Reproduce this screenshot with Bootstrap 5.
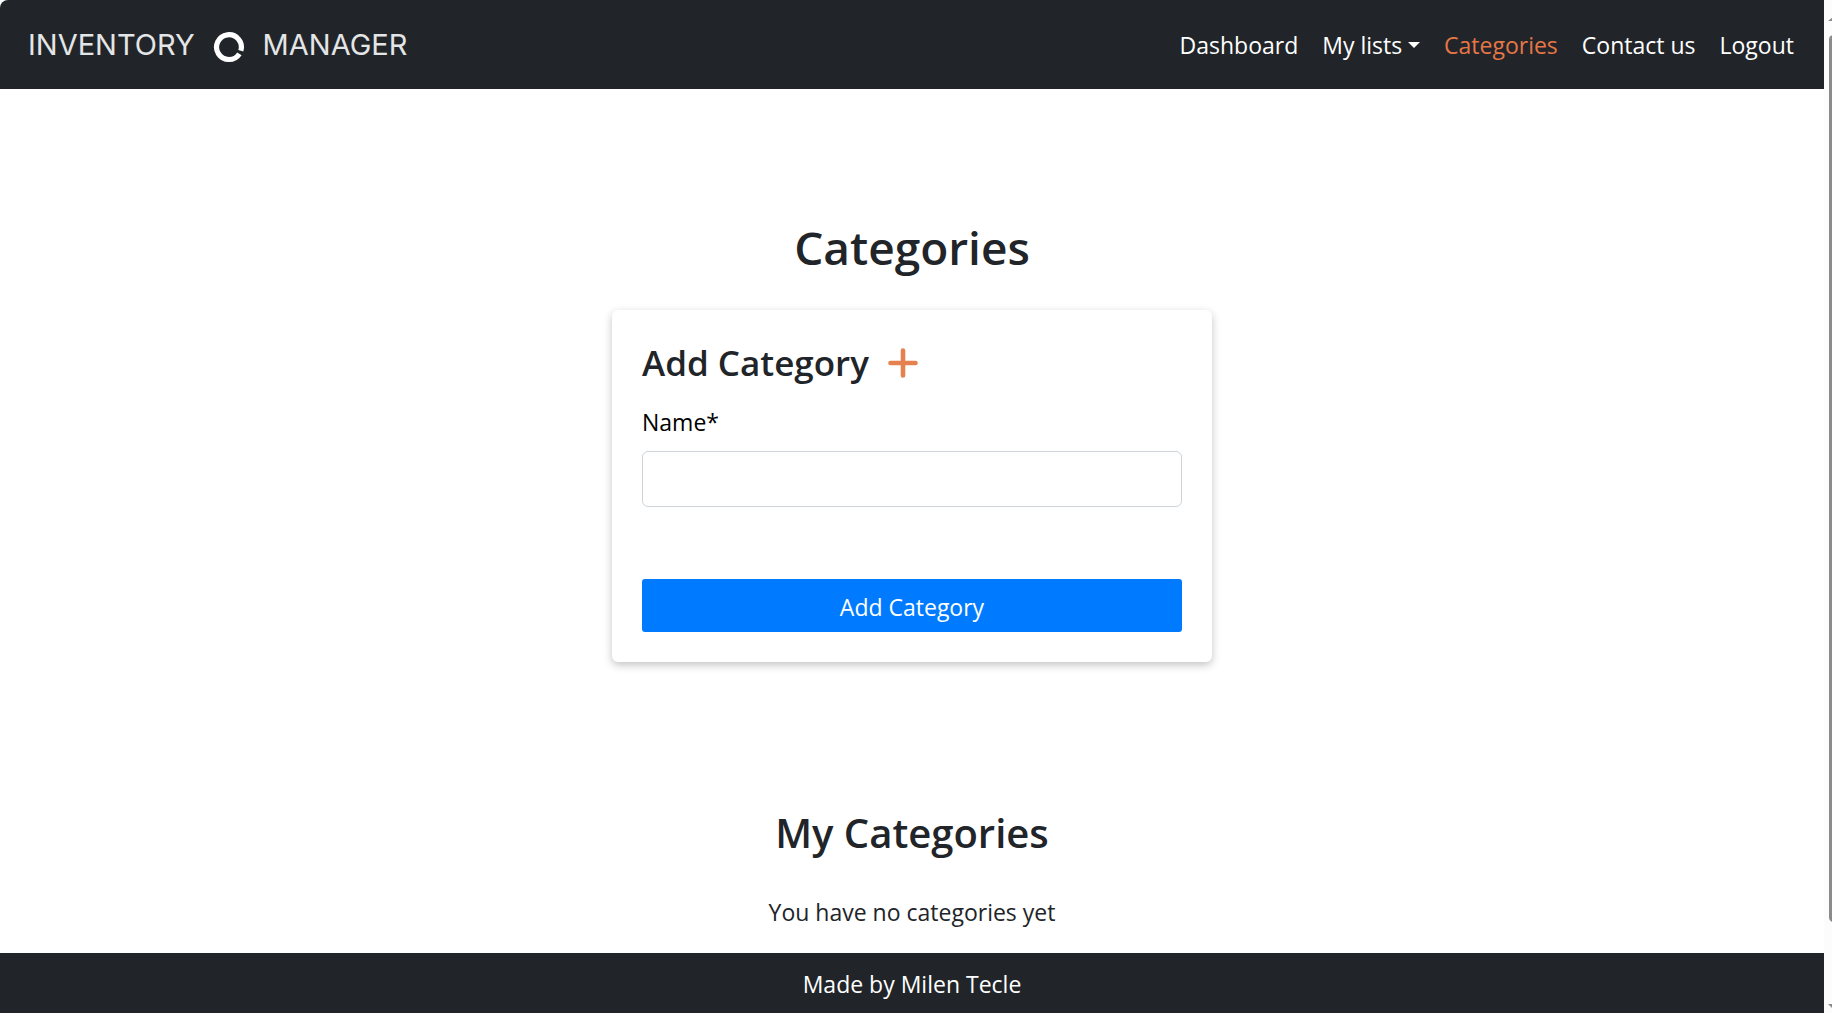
<!DOCTYPE html>
<html lang="en">
<head>
<meta charset="utf-8">
<meta name="viewport" content="width=device-width, initial-scale=1">
<title>Categories - Inventory Manager</title>
<link href="https://cdn.jsdelivr.net/npm/bootstrap@5.3.0/dist/css/bootstrap.min.css" rel="stylesheet">
<style>
  body { font-family: "Open Sans", "Noto Sans", sans-serif; font-size: 23px; line-height: 36px; color: #212529; background: #fff; }
  h1, h2, h3 { font-weight: 600; }
  .site-nav { min-height: 89px; padding: 0 18px; border-top-left-radius: 8px; --bs-navbar-nav-link-padding-x: 12px; }
  .site-nav .nav-link { padding: 12px; line-height: 36px; color: #fff; }
  .site-nav .nav-link.active { color: #e67646; }
  .brand-logo { font-family: Inter, sans-serif; font-size: 29px; line-height: 36px; font-weight: 400; color: #e4e5e6; padding: 0; margin-left: 10px; gap: 18px; }
  .brand-logo svg { margin-top: 4px; }
  .brand-logo:hover { color: #fff; }
  .page-title { font-size: 46px; line-height: 56px; margin: 130px 0 35px; }
  .add-card { width: 100%; max-width: 600px; padding: 30px; border-radius: 6px; box-shadow: 0 3px 8px rgba(0,0,0,.24); }
  .add-title { font-size: 35px; line-height: 46px; gap: 19px; margin-bottom: 18px; }
  .add-card .form-label { color: #000; margin-bottom: 11px; }
  .add-card .form-control { height: 56px; border-color: #ced4da; border-radius: 6px; }
  .btn-add { margin-top: 72px; height: 53px; padding: 4px 0 0; font-size: 23px; color: #fff; background: #007bff; border: 0; border-radius: 3px; }
  .btn-add:hover { color: #fff; background: #0069d9; }
  .list-title { font-size: 40px; line-height: 50px; margin: 146px 0 36px; }
  .empty-note { margin-bottom: 20px; }
  .site-footer { min-height: 60px; padding: 13px 0 11px; }
  .scroll-rail { width: 8px; background: #fcfcfc; padding: 17px 0 3px 4px; overflow: hidden; }
  .rail-thumb { width: 9px; margin: 14px 0 82px 1px; border-radius: 5px; background: #8b8b8b; }
</style>
</head>
<body>
<div class="d-flex min-vh-100">
  <div class="d-flex flex-column flex-grow-1">
    <nav class="navbar navbar-expand-lg navbar-dark bg-dark site-nav">
      <a class="navbar-brand brand-logo d-flex align-items-center" href="#">
        <span>INVENTORY</span>
        <svg width="32" height="32" viewBox="0 0 32 32" fill="none" aria-hidden="true">
          <path d="M27.8 19.8A12.4 12.4 0 1 0 26.4 22.8" stroke="#fff" stroke-width="5.2"/>
        </svg>
        <span>MANAGER</span>
      </a>
      <button class="navbar-toggler" type="button" data-bs-toggle="collapse" data-bs-target="#mainNav" aria-controls="mainNav" aria-expanded="false" aria-label="Toggle navigation"><span class="navbar-toggler-icon"></span></button>
      <div class="collapse navbar-collapse" id="mainNav">
        <ul class="navbar-nav ms-auto">
          <li class="nav-item"><a class="nav-link" href="#">Dashboard</a></li>
          <li class="nav-item dropdown"><a class="nav-link dropdown-toggle" href="#" role="button" data-bs-toggle="dropdown" aria-expanded="false">My lists</a></li>
          <li class="nav-item"><a class="nav-link active" aria-current="page" href="#">Categories</a></li>
          <li class="nav-item"><a class="nav-link" href="#">Contact us</a></li>
          <li class="nav-item"><a class="nav-link" href="#">Logout</a></li>
        </ul>
      </div>
    </nav>
    <main class="flex-grow-1 d-flex flex-column align-items-center">
      <h1 class="page-title">Categories</h1>
      <form class="add-card bg-white">
        <h3 class="add-title d-flex align-items-center">Add Category
          <svg width="30" height="30" viewBox="0 0 30 30" fill="none" stroke="#e4814f" stroke-width="4.6" stroke-linecap="round" aria-hidden="true"><path d="M15 2.5V27.5M2.5 15H27.5"/></svg>
        </h3>
        <label class="form-label d-block" for="catName">Name*</label>
        <input class="form-control" type="text" id="catName" required>
        <button class="btn btn-add w-100" type="submit">Add Category</button>
      </form>
      <h2 class="list-title">My Categories</h2>
      <p class="empty-note">You have no categories yet</p>
    </main>
    <footer class="site-footer bg-dark text-white text-center">Made by Milen Tecle</footer>
  </div>
  <div class="scroll-rail d-flex flex-column flex-shrink-0" aria-hidden="true">
    <svg width="8" height="4" viewBox="0 0 8 4"><path d="M0 4L5 0L10 4Z" fill="#8b8b8b"/></svg>
    <div class="rail-thumb flex-grow-1"></div>
    <svg width="8" height="6" viewBox="0 0 8 6"><path d="M0 0H10L5 5Z" fill="#8b8b8b"/></svg>
  </div>
</div>
<script src="https://cdn.jsdelivr.net/npm/bootstrap@5.3.0/dist/js/bootstrap.bundle.min.js"></script>
</body>
</html>
